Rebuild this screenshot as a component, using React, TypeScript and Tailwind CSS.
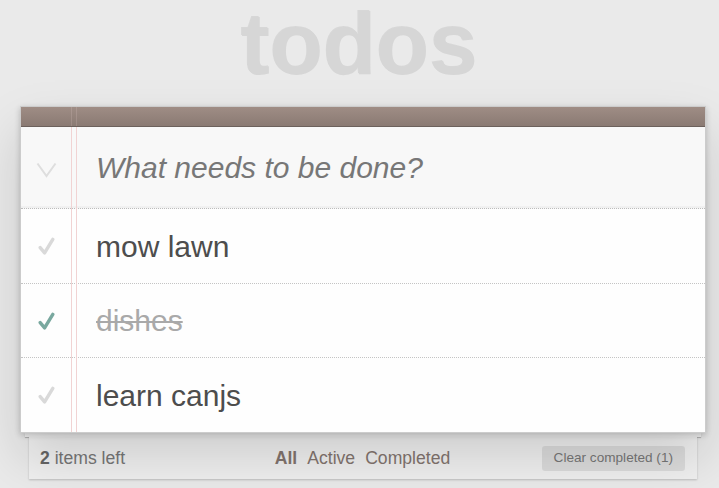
import React from 'react';

type Todo = { id: number; text: string; done: boolean };

const todos: Todo[] = [
  { id: 1, text: 'mow lawn', done: false },
  { id: 2, text: 'dishes', done: true },
  { id: 3, text: 'learn canjs', done: false },
];

// row heights including the dotted divider
const rowClass = ['h-[75px] border-b', 'h-[74px] border-b', 'h-[74px]'];

const Check: React.FC<{ done: boolean }> = ({ done }) => (
  <svg width="17" height="19" viewBox="0 0 17 19" className="block">
    <polyline
      points="2.2,10.6 6.6,15.9 14.8,2.4"
      fill="none"
      stroke={done ? '#79a89f' : '#d9d9d9'}
      strokeWidth="3.4"
      strokeLinecap="round"
      strokeLinejoin="round"
    />
  </svg>
);

const App: React.FC = () => {
  const left = todos.filter((t) => !t.done).length;
  const completed = todos.length - left;

  return (
    <div className="min-h-[488px] bg-[#eaeaea] font-['Liberation_Sans',Arial,sans-serif] overflow-hidden">
      <h1 className="h-[87px] text-center text-[87px] leading-[87px] font-bold text-[#d6d6d6] [text-shadow:-1px_-1px_0_rgba(0,0,0,0.08)]">
        todos
      </h1>

      <div className="ml-[20px] mt-[19px] w-[686px]">
        <section className="relative border border-[#cccccc] bg-[#fdfdfd] shadow-[0_2px_6px_0_rgba(0,0,0,0.2),0_25px_50px_0_rgba(0,0,0,0.15)]">
          {/* notebook margin lines */}
          <div className="absolute left-[50px] top-0 bottom-0 w-[6px] border-x border-[#f1d3d3] z-10 pointer-events-none" />

          <header className="relative z-20 h-[20px] border-b border-[#6c615c] bg-linear-to-b from-[#9f8d85] to-[#8a7a73]">
            <div className="absolute left-[50px] top-0 bottom-0 w-[6px] border-x border-[#ffe6e6]/15" />
          </header>

          <div className="flex h-[82px] items-center border-b border-dotted border-[#bdbdbd] bg-[#f8f8f8] shadow-[inset_0_-2px_1px_rgba(0,0,0,0.03)]">
            <div className="flex w-[50px] justify-center">
              <svg width="21" height="16" viewBox="0 0 21 16" className="block mt-[4px]">
                <polyline points="1.5,1.5 10.5,14 19.5,1.5" fill="none" stroke="#dedede" strokeWidth="2" />
              </svg>
            </div>
            <span className="pl-[25px] text-[30px] italic text-[#777777]">What needs to be done?</span>
          </div>

          <ul>
            {todos.map((t, i) => (
              <li
                key={t.id}
                className={'flex items-center bg-[#fefefe] border-dotted border-[#c4c4c4] ' + rowClass[i]}
              >
                <div className="flex w-[50px] justify-center pt-[1px]">
                  <Check done={t.done} />
                </div>
                <span
                  className={
                    'pl-[25px] text-[30px] ' +
                    (t.done ? 'text-[#a9a9a9] line-through decoration-[2px]' : 'text-[#4d4d4d]')
                  }
                >
                  {t.text}
                </span>
              </li>
            ))}
          </ul>
        </section>

        {/* paper stack */}
        <div className="mx-[5px] h-[4px] bg-[#f7f7f7] shadow-[0_1px_1px_rgba(0,0,0,0.25)]" />
        <footer className="mx-[9px] grid h-[42px] grid-cols-[1fr_auto_1fr] items-center bg-[#f0f0f0] pl-[11px] pr-[12px] text-[17.6px] text-[#777777] shadow-[0_1px_2px_rgba(0,0,0,0.2)]">
          <span>
            <strong className="text-[#666666]">{left}</strong> items left
          </span>
          <div className="flex gap-[10px] text-[#83756f]">
            <span className="font-bold">All</span>
            <span>Active</span>
            <span>Completed</span>
          </div>
          <div className="flex justify-end">
            <button className="h-[25px] rounded-[3px] bg-[#dcdcdc] px-[12px] text-[13.6px] text-[#777777]">
              Clear completed ({completed})
            </button>
          </div>
        </footer>
      </div>
    </div>
  );
};

export default App;
